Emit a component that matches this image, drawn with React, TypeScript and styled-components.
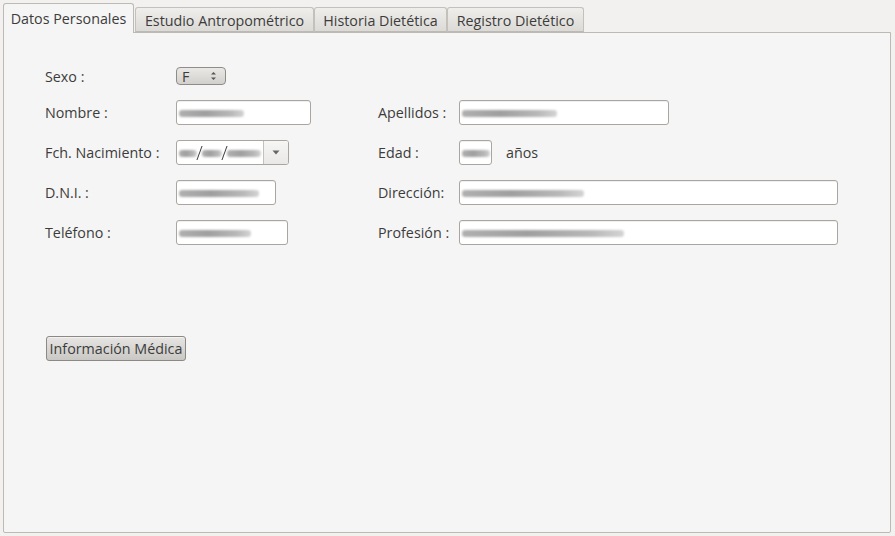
import React from "react";
import styled, { createGlobalStyle } from "styled-components";

const Global = createGlobalStyle`
  html, body { margin: 0; padding: 0; background: #f2f1f0; }
  body { font-family: "Open Sans", "DejaVu Sans", sans-serif; color: #3c3c3c; }
`;

const FS = "14.3px";

const Window = styled.div`
  width: 895px;
  height: 536px;
  box-sizing: border-box;
  padding: 3px 4px 3px 3px;
  display: flex;
  flex-direction: column;
`;

const TabBar = styled.div`
  display: flex;
  align-items: flex-end;
  height: 29px;
  position: relative;
  z-index: 1;
`;

const Tab = styled.div<{ $active?: boolean; $w: number }>`
  box-sizing: border-box;
  width: ${(p) => p.$w}px;
  height: ${(p) => (p.$active ? "30px" : "25px")};
  margin-bottom: ${(p) => (p.$active ? "-1px" : "0")};
  display: flex;
  align-items: center;
  justify-content: center;
  white-space: nowrap;
  font-size: ${FS};
  color: #3c3c3c;
  border: 1px solid ${(p) => (p.$active ? "#bdb9b3" : "#c4c0ba")};
  border-bottom: ${(p) => (p.$active ? "none" : "1px solid #bdb9b3")};
  border-radius: 3px 3px 0 0;
  background: ${(p) =>
    p.$active ? "#f5f5f5" : "linear-gradient(#efeeec, #dcdad6)"};
  margin-right: ${(p) => (p.$active ? "1px" : "0")};
  padding-top: ${(p) => (p.$active ? "0" : "1px")};
`;

const Panel = styled.div`
  flex: 1;
  box-sizing: border-box;
  border: 1px solid #bdb9b3;
  border-radius: 0 0 2px 2px;
  background: #f5f5f5;
  padding: 31px 0 0 41px;
  display: flex;
  flex-direction: column;
`;

const Form = styled.div`
  display: grid;
  grid-template-columns: 131px 202px 81px 1fr;
  grid-template-rows: 21px;
  grid-auto-rows: 25px;
  row-gap: 15px;
  padding-right: 52px;
`;

const Label = styled.div`
  font-size: ${FS};
  display: flex;
  align-items: center;
  white-space: nowrap;
  color: #3c3c3c;
`;

const Cell = styled.div`
  display: flex;
  align-items: center;
  gap: 14px;
`;

const SexoRow = styled.div`
  grid-column: 1 / -1;
  display: flex;
  align-items: flex-end;
`;

const SexoLabel = styled(Label)`
  width: 131px;
  height: 18px;
`;

const Input = styled.div<{ $w: number }>`
  box-sizing: border-box;
  width: ${(p) => p.$w}px;
  height: 25px;
  background: #ffffff;
  border: 1px solid #aaa59e;
  border-radius: 3px;
  box-shadow: inset 0 1px 0 rgba(0, 0, 0, 0.06);
  display: flex;
  align-items: center;
  padding-left: 2px;
  overflow: hidden;
`;

const Blur = styled.span<{ $w: number }>`
  display: block;
  flex: none;
  width: ${(p) => p.$w}px;
  height: 7px;
  border-radius: 3px;
  background: linear-gradient(90deg, #b0b0b0, #9f9f9f 40%, #b8b8b8 80%, #d4d4d4);
  filter: blur(1.3px);
  margin-top: 1px;
`;

const Spin = styled.div`
  box-sizing: border-box;
  width: 50px;
  height: 18px;
  border: 1px solid #8f8b85;
  border-radius: 4px;
  background: linear-gradient(#e9e8e6, #d2d0cc);
  display: flex;
  align-items: center;
  justify-content: space-between;
  padding: 0 8px 0 5px;
  font-size: ${FS};
  color: #3c3c3c;
`;

const SpinArrows = styled.svg`
  width: 7px;
  height: 12px;
`;

const Combo = styled.div`
  box-sizing: border-box;
  width: 113px;
  height: 25px;
  border: 1px solid #aaa59e;
  border-radius: 3px;
  background: #ffffff;
  display: flex;
  overflow: hidden;
`;

const ComboText = styled.div`
  flex: 1;
  display: flex;
  align-items: center;
  padding-left: 2px;
`;

const ComboButton = styled.div`
  width: 24px;
  border-left: 1px solid #c4c0ba;
  background: linear-gradient(#f6f6f5, #e9e8e6);
  display: flex;
  align-items: center;
  justify-content: center;
`;

const Slash = styled.span`
  display: inline-block;
  flex: none;
  width: 1px;
  height: 14px;
  background: #3a3a3a;
  transform: skewX(-20deg);
  margin: 0 2px;
`;

const Button = styled.button`
  box-sizing: border-box;
  margin-top: 91px;
  margin-left: 1px;
  width: 140px;
  height: 25px;
  padding: 0;
  border: 1px solid #8c8883;
  border-radius: 3px;
  background: linear-gradient(#e6e5e3, #cac8c4);
  font-family: "Open Sans", "DejaVu Sans", sans-serif;
  font-size: ${FS};
  color: #3c3c3c;
  white-space: nowrap;
  box-shadow: inset 0 1px 0 rgba(255, 255, 255, 0.5);
`;

const Unit = styled.span`
  font-size: ${FS};
  color: #3c3c3c;
`;

export default function App() {
  return (
    <>
      <Global />
      <Window>
        <TabBar>
          <Tab $active $w={131}>Datos Personales</Tab>
          <Tab $w={179}>Estudio Antropométrico</Tab>
          <Tab $w={133}>Historia Dietética</Tab>
          <Tab $w={137}>Registro Dietético</Tab>
        </TabBar>
        <Panel>
          <Form>
            <SexoRow>
              <SexoLabel>Sexo :</SexoLabel>
              <Spin>
                <span>F</span>
                <SpinArrows viewBox="0 0 7 12">
                  <path d="M1 4.5 L3.5 2 L6 4.5 Z" fill="#555" />
                  <path d="M1 7.5 L3.5 10 L6 7.5 Z" fill="#555" />
                </SpinArrows>
              </Spin>
            </SexoRow>

            <Label>Nombre :</Label>
            <Cell>
              <Input $w={135}>
                <Blur $w={65} />
              </Input>
            </Cell>
            <Label>Apellidos :</Label>
            <Cell>
              <Input $w={210}>
                <Blur $w={95} />
              </Input>
            </Cell>

            <Label>Fch. Nacimiento :</Label>
            <Cell>
              <Combo>
                <ComboText>
                  <Blur $w={18} />
                  <Slash />
                  <Blur $w={20} />
                  <Slash />
                  <Blur $w={34} />
                </ComboText>
                <ComboButton>
                  <svg width="8" height="5" viewBox="0 0 8 5">
                    <path d="M0.5 0.5 L7.5 0.5 L4 4.5 Z" fill="#666" />
                  </svg>
                </ComboButton>
              </Combo>
            </Cell>
            <Label>Edad :</Label>
            <Cell>
              <Input $w={33}>
                <Blur $w={28} />
              </Input>
              <Unit>años</Unit>
            </Cell>

            <Label>D.N.I. :</Label>
            <Cell>
              <Input $w={100}>
                <Blur $w={80} />
              </Input>
            </Cell>
            <Label>Dirección:</Label>
            <Cell>
              <Input $w={379}>
                <Blur $w={122} />
              </Input>
            </Cell>

            <Label>Teléfono :</Label>
            <Cell>
              <Input $w={112}>
                <Blur $w={72} />
              </Input>
            </Cell>
            <Label>Profesión :</Label>
            <Cell>
              <Input $w={379}>
                <Blur $w={162} />
              </Input>
            </Cell>
          </Form>
          <div>
            <Button>Información Médica</Button>
          </div>
        </Panel>
      </Window>
    </>
  );
}
